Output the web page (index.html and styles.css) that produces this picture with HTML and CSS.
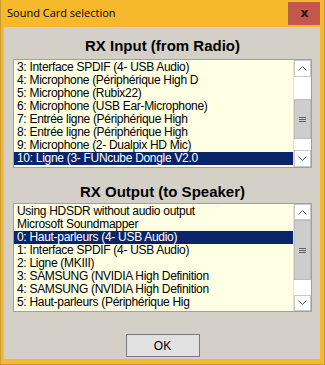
FILE: index.html
```html
<!DOCTYPE html>
<html lang="fr">
  <head>
    <meta charset="UTF-8" />
    <title>Sound Card selection</title>
    <link rel="stylesheet" href="styles.css">
  </head>
  <body>
    <div class="window">
      <div class="titlebar">
        <span class="title">Sound Card selection</span>
        <span class="close">x</span>
      </div>
      <div class="client">
        <div class="heading">RX Input (from Radio)</div>
        <div class="listbox">
          <ul class="items">
            <li>3: Interface SPDIF (4- USB Audio)</li>
            <li>4: Microphone (Périphérique High D</li>
            <li>5: Microphone (Rubix22)</li>
            <li>6: Microphone (USB Ear-Microphone)</li>
            <li>7: Entrée ligne (Périphérique High</li>
            <li>8: Entrée ligne (Périphérique High</li>
            <li>9: Microphone (2- Dualpix HD Mic)</li>
            <li class="selected">10: Ligne (3- FUNcube Dongle V2.0</li>
          </ul>
          <div class="scrollbar">
            <div class="arrow"><svg width="9" height="5" viewBox="0 0 9 5"><path d="M0.5 4.5 L4.5 0.5 L8.5 4.5" fill="none" stroke="#606060" /></svg></div>
            <div class="track" style="height: 22px"></div>
            <div class="thumb" style="height: 40px"><span class="grip"></span></div>
            <div class="track" style="height: 11px"></div>
            <div class="arrow"><svg width="9" height="5" viewBox="0 0 9 5"><path d="M0.5 0.5 L4.5 4.5 L8.5 0.5" fill="none" stroke="#606060" /></svg></div>
          </div>
        </div>

        <div class="heading second">RX Output (to Speaker)</div>
        <div class="listbox">
          <ul class="items">
            <li>Using HDSDR without audio output</li>
            <li>Microsoft Soundmapper</li>
            <li class="selected">0: Haut-parleurs (4- USB Audio)</li>
            <li>1: Interface SPDIF (4- USB Audio)</li>
            <li>2: Ligne (MKIII)</li>
            <li>3: SAMSUNG (NVIDIA High Definition</li>
            <li>4: SAMSUNG (NVIDIA High Definition</li>
            <li>5: Haut-parleurs (Périphérique Hig</li>
          </ul>
          <div class="scrollbar">
            <div class="arrow"><svg width="9" height="5" viewBox="0 0 9 5"><path d="M0.5 4.5 L4.5 0.5 L8.5 4.5" fill="none" stroke="#606060" /></svg></div>
            <div class="thumb" style="height: 60px"><span class="grip"></span></div>
            <div class="track" style="height: 16px"></div>
            <div class="arrow"><svg width="9" height="5" viewBox="0 0 9 5"><path d="M0.5 0.5 L4.5 4.5 L8.5 0.5" fill="none" stroke="#606060" /></svg></div>
          </div>
        </div>

        <div class="buttons">
          <button>OK</button>
        </div>
      </div>
    </div>
  </body>
</html>
```

FILE: styles.css
```css
body {
  margin: 0;
  font-family: "Liberation Sans", Arial, sans-serif;
  color: #000;
}

.window {
  width: 325px;
  height: 365px;
  box-sizing: border-box;
  background-color: #f6b92b;
  border: 1px solid #c99a2e;
  border-top: none;
  display: flex;
  flex-direction: column;
}

.titlebar {
  height: 27px;
  display: flex;
  align-items: flex-start;
  justify-content: space-between;
  flex-shrink: 0;
}

.title {
  font-family: "Open Sans", "Noto Sans", sans-serif;
  font-size: 11px;
  line-height: 26px;
  padding-left: 6px;
}

.close {
  width: 31px;
  height: 23px;
  margin: 2px 4px 0 0;
  background-color: #c7564d;
  border-left: 1px solid #a8683a;
  font-family: "DejaVu Sans", sans-serif;
  font-weight: bold;
  font-size: 13px;
  line-height: 21px;
  text-align: center;
  color: #1a1a1a;
}

.client {
  flex: 1;
  margin: 0 4px 5px 3px;
  background-color: #d4d0c8;
  padding: 9px 8px 0 9px;
  display: flex;
  flex-direction: column;
}

.heading {
  font-weight: bold;
  font-size: 15px;
  line-height: 20px;
  text-align: center;
  margin-bottom: 3px;
}

.heading.second {
  margin-top: 14px;
  margin-bottom: 1px;
}

.listbox {
  display: flex;
  height: 107px;
  border: 1px solid #a0a0a0;
  background-color: #ffffe4;
}

.items {
  list-style: none;
  margin: 0;
  padding: 1px 0 0 0;
  flex: 1;
  font-size: 12px;
  letter-spacing: -0.3px;
}

.items li {
  height: 13px;
  line-height: 13px;
  padding-left: 3px;
  white-space: nowrap;
  overflow: hidden;
}

.items li.selected {
  background-color: #0a246a;
  color: #fff;
}

.scrollbar {
  width: 17px;
  display: flex;
  flex-direction: column;
  background-color: #fff;
  border-left: 1px solid #e0e0e0;
}

.arrow {
  height: 17px;
  display: flex;
  align-items: center;
  justify-content: center;
  background-color: #fff;
  border: 1px solid #c8c8c8;
  box-sizing: border-box;
}

.track {
  background-color: #fff;
}

.thumb {
  background-color: #cdcdcd;
  border: 1px solid #bdbdbd;
  box-sizing: border-box;
  display: flex;
  align-items: center;
  justify-content: center;
  flex-shrink: 0;
}

.grip {
  width: 7px;
  height: 5px;
  border-top: 1px solid #606060;
  border-bottom: 1px solid #606060;
  box-sizing: border-box;
  background: linear-gradient(#606060, #606060) center / 7px 1px no-repeat;
}

.buttons {
  flex: 1;
  display: flex;
  justify-content: center;
  align-items: flex-end;
  padding-bottom: 2px;
}

button {
  width: 74px;
  height: 23px;
  background-color: #e1e1e1;
  border: 1px solid #7a7a7a;
  font-family: "Liberation Sans", Arial, sans-serif;
  font-size: 12px;
  color: #000;
  padding: 0;
}
```
